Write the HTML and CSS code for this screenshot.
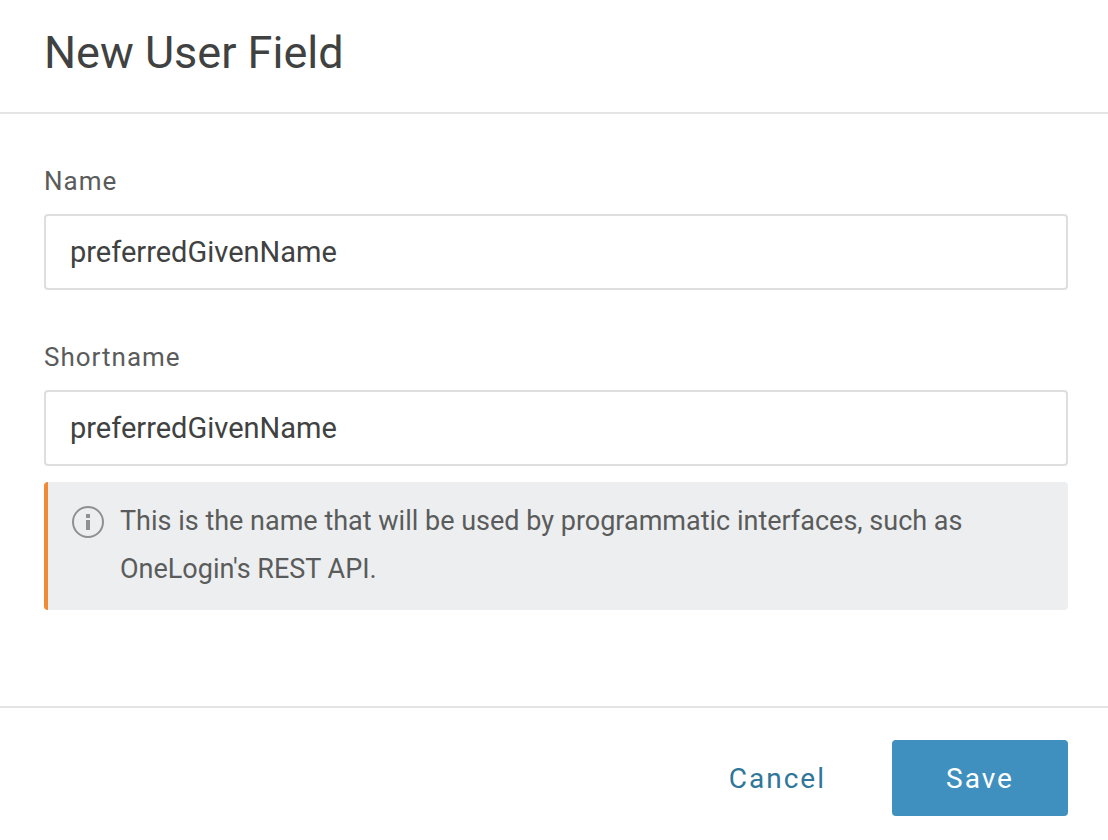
FILE: index.html
```html
<!DOCTYPE html>
<html lang="en">
<head>
<meta charset="utf-8">
<meta name="viewport" content="width=device-width, initial-scale=1">
<title>New User Field</title>
<link rel="stylesheet" href="styles.css">
</head>
<body>
<form class="dialog">
  <header class="dialog-header">
    <h1 class="dialog-title">New User Field</h1>
  </header>
  <main class="dialog-body">
    <div class="field">
      <label class="field-label" for="name">Name</label>
      <input class="field-input" id="name" type="text" value="preferredGivenName">
    </div>
    <div class="field">
      <label class="field-label" for="shortname">Shortname</label>
      <input class="field-input" id="shortname" type="text" value="preferredGivenName" aria-describedby="shortname-hint">
      <div class="hint">
        <svg class="hint-icon" viewBox="0 0 32 32" aria-hidden="true">
          <circle cx="16" cy="16" r="15" fill="none" stroke="currentColor" stroke-width="2"/>
          <path d="M14 8h4v4h-4zM14 14h4v10h-4z" fill="currentColor"/>
        </svg>
        <p class="hint-text" id="shortname-hint">This is the name that will be used by programmatic interfaces, such as OneLogin's REST API.</p>
      </div>
    </div>
  </main>
  <footer class="dialog-footer">
    <button class="button button-link" type="button">Cancel</button>
    <button class="button button-primary" type="submit">Save</button>
  </footer>
</form>
</body>
</html>
```
FILE: styles.css
```css
* {
  box-sizing: border-box;
}

body {
  margin: 0;
  background: #fff;
  color: #404241;
  font-family: Roboto, "Liberation Sans", sans-serif;
}

.dialog-header {
  padding: 25px 44px 31px;
  border-bottom: 2px solid #e4e4e4;
}

.dialog-title {
  margin: 0;
  font-size: 45px;
  font-weight: 400;
  line-height: 56px;
}

.dialog-body {
  display: flex;
  flex-direction: column;
  gap: 48px;
  padding: 48px 40px 96px 44px;
}

.field-label {
  display: block;
  padding-top: 2px;
  margin-bottom: 16px;
  color: #5a5c5b;
  font-size: 26px;
  line-height: 34px;
  letter-spacing: 1px;
}

.field-input {
  display: block;
  width: 100%;
  height: 76px;
  padding: 0 24px;
  border: 2px solid #dedede;
  border-radius: 4px;
  background: #fff;
  color: #404241;
  font: inherit;
  font-size: 29px;
}

.hint {
  display: flex;
  gap: 16px;
  margin-top: 16px;
  padding: 15px 24px 17px;
  border-left: 4px solid #f08a33;
  border-radius: 4px;
  background: #edeef0;
  color: #5a5c5b;
}

.hint-icon {
  flex: none;
  width: 32px;
  height: 32px;
  margin-top: 9px;
  color: #8f9190;
}

.hint-text {
  margin: 0;
  font-size: 27px;
  line-height: 48px;
}

.dialog-footer {
  display: flex;
  justify-content: flex-end;
  gap: 12px;
  padding: 32px 40px 24px;
  border-top: 2px solid #e4e4e4;
}

.button {
  min-width: 176px;
  height: 76px;
  padding: 0 54px;
  border: 0;
  border-radius: 4px;
  font: inherit;
  font-size: 28px;
  letter-spacing: 2px;
  cursor: pointer;
}

.button-link {
  background: none;
  color: #2f7698;
}

.button-primary {
  background: #3f90bf;
  color: #fff;
}
```
